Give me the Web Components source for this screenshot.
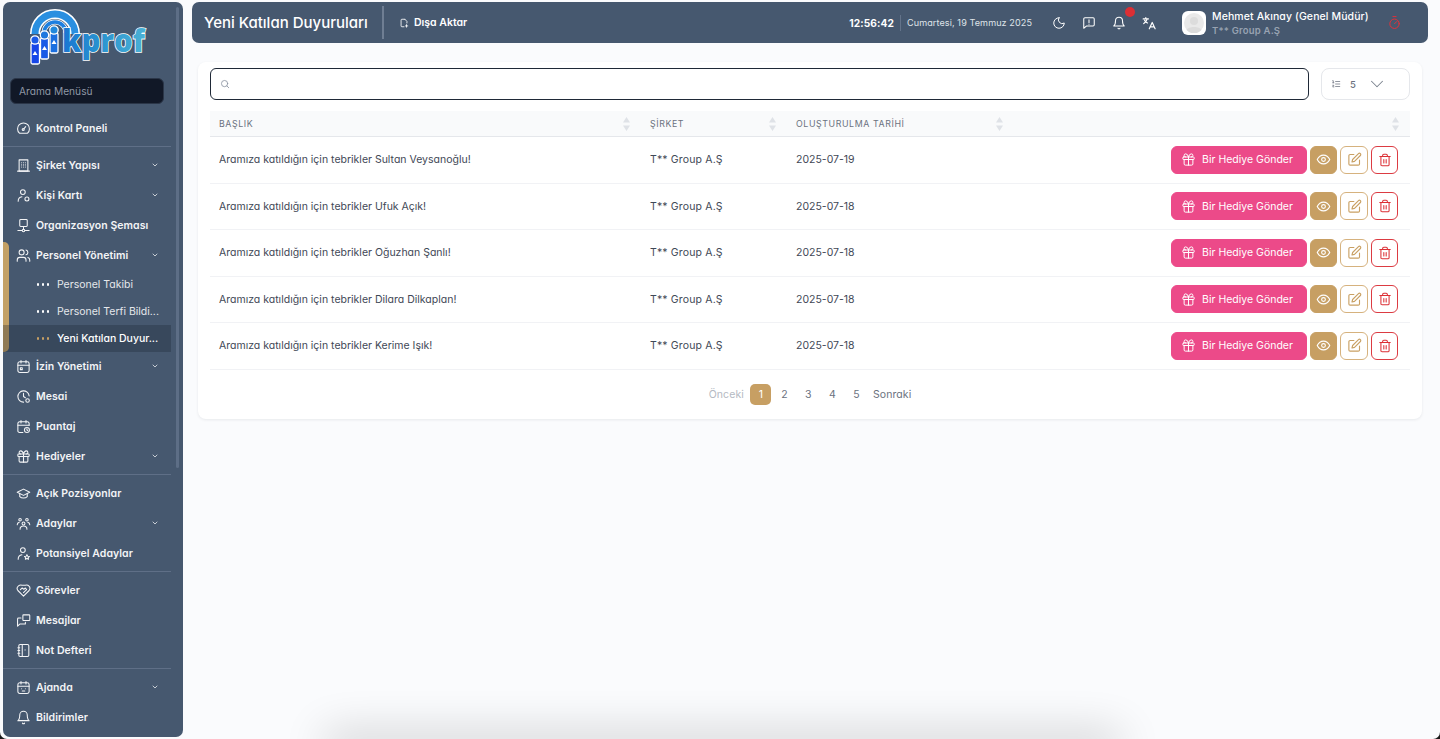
<!DOCTYPE html>
<html lang="tr">
<head>
<meta charset="utf-8">
<title>Yeni Katılan Duyuruları</title>
<style>
  html { background: #1a1a1a; height: 100%; }
  body {
    margin: 0; height: 739px; overflow: hidden; background: #fafbfd;
    border-radius: 0 0 7px 7px; position: relative;
    font-family: Inter, "Liberation Sans", sans-serif;
    font-feature-settings: "cv11" 1;
  }
</style>
</head>
<body>
<app-shell>
  <side-bar slot="side">
    <side-item icon="gauge" label="Kontrol Paneli"></side-item>
    <side-line></side-line>
    <side-item icon="building" label="Şirket Yapısı" caret></side-item>
    <side-item icon="userGear" label="Kişi Kartı" caret></side-item>
    <side-item icon="org" label="Organizasyon Şeması"></side-item>
    <side-group>
      <side-item icon="users" label="Personel Yönetimi" caret></side-item>
      <side-sub label="Personel Takibi"></side-sub>
      <side-sub label="Personel Terfi Bildi..."></side-sub>
      <side-sub label="Yeni Katılan Duyur..." active></side-sub>
    </side-group>
    <side-item icon="calendar" label="İzin Yönetimi" caret></side-item>
    <side-item icon="clockGear" label="Mesai"></side-item>
    <side-item icon="calendarClock" label="Puantaj"></side-item>
    <side-item icon="gift" label="Hediyeler" caret></side-item>
    <side-line></side-line>
    <side-item icon="cap" label="Açık Pozisyonlar"></side-item>
    <side-item icon="people" label="Adaylar" caret></side-item>
    <side-item icon="userStar" label="Potansiyel Adaylar"></side-item>
    <side-line></side-line>
    <side-item icon="gem" label="Görevler"></side-item>
    <side-item icon="messages" label="Mesajlar"></side-item>
    <side-item icon="notebook" label="Not Defteri"></side-item>
    <side-line></side-line>
    <side-item icon="calendarFace" label="Ajanda" caret></side-item>
    <side-item icon="bell" label="Bildirimler"></side-item>
  </side-bar>
  <top-bar slot="top" heading="Yeni Katılan Duyuruları"></top-bar>
  <list-card slot="main"></list-card>
</app-shell>

<script>
const ICONS = {
  gauge: '<path d="M5.5 19.5a9.5 9.5 0 1 1 13 0z"/><circle cx="11.5" cy="13.5" r="1.6"/><path d="M12.5 12.5l3-3.5"/>',
  building: '<rect x="5" y="3" width="14" height="18"/><path d="M2.5 21h19M9 7.5h.01M12 7.5h.01M15 7.5h.01M9 11h.01M12 11h.01M15 11h.01M9 14.5h.01M12 14.5h.01M15 14.5h.01"/>',
  userGear: '<circle cx="11" cy="6.5" r="3.8"/><path d="M3.5 21c0-4.5 2.5-6.5 6-7"/><circle cx="17.5" cy="17.5" r="3.2"/>',
  org: '<rect x="6" y="2.5" width="12" height="11" rx="1.5"/><path d="M12 13.5v5M3 20h6.5M14.5 20H21"/><circle cx="12" cy="20" r="2"/>',
  users: '<path d="M16 21v-2a4 4 0 0 0-4-4H6a4 4 0 0 0-4 4v2"/><circle cx="9" cy="7" r="4"/><path d="M22 21v-2a4 4 0 0 0-3-3.87"/><path d="M16 3.13a4 4 0 0 1 0 7.75"/>',
  calendar: '<rect x="3" y="4.5" width="18" height="17" rx="3"/><path d="M16 2.5v4M8 2.5v4M3 10h18"/><rect x="7" y="14" width="3" height="3"/>',
  clockGear: '<path d="M21 11a9 9 0 1 0-9 10"/><path d="M12 7v5l3 2"/><circle cx="18.5" cy="18.5" r="2.8"/>',
  calendarClock: '<path d="M21 10V7a2.5 2.5 0 0 0-2.5-2.5h-13A2.5 2.5 0 0 0 3 7v12a2.5 2.5 0 0 0 2.5 2.5H11"/><path d="M16 2.5v4M8 2.5v4M3 10h18"/><circle cx="17.5" cy="17.5" r="4"/><path d="M17.5 15.8v1.9l1.2.7"/>',
  gift: '<rect x="3" y="8" width="18" height="4" rx="1"/><path d="M12 8v13"/><path d="M19 12v7a2 2 0 0 1-2 2H7a2 2 0 0 1-2-2v-7"/><path d="M7.5 8a2.5 2.5 0 0 1 0-5A4.8 8 0 0 1 12 8a4.8 8 0 0 1 4.5-5 2.5 2.5 0 0 1 0 5"/>',
  cap: '<path d="M22 10L12 5 2 10l10 5z"/><path d="M6 12.5V17c3 3 9 3 12 0v-4.5"/>',
  people: '<circle cx="6.5" cy="6" r="2"/><circle cx="17.5" cy="6" r="2"/><circle cx="12" cy="12" r="2.3"/><path d="M2 14c0-2 1-3.5 3-3.8M22 14c0-2-1-3.5-3-3.8M6.5 21c0-3 2-5 5.5-5s5.5 2 5.5 5"/>',
  userStar: '<circle cx="11" cy="6.5" r="3.8"/><path d="M3.5 21c0-4.5 2.5-6.5 6-7"/><path d="M17.5 13.8l1.2 2.5 2.8.4-2 1.9.5 2.7-2.5-1.3-2.5 1.3.5-2.7-2-1.9 2.8-.4z"/>',
  gem: '<path d="M12 21L3 12a5.5 5.5 0 0 1 1-7.5C6 3 8 3 9.5 3.5H15c2-.7 4-.5 5.5 1.2A5.5 5.5 0 0 1 21 12z"/><path d="M7 10.5L10 8l2.5 2L15 8l2 2.5-5 5"/>',
  messages: '<rect x="11" y="3" width="11" height="9" rx="1"/><path d="M8 8H4a1.5 1.5 0 0 0-1.5 1.5V21l4-3.5H15V15"/>',
  notebook: '<rect x="4.5" y="2.5" width="16" height="19" rx="2"/><path d="M10 2.5v19M3 7.5h3M3 12h3M3 16.5h3M14.5 11h.01"/>',
  calendarFace: '<rect x="3" y="4.5" width="18" height="17" rx="3"/><path d="M16 2.5v4M8 2.5v4M3 10h18M9 14h.01M15 14h.01M10 17.5h4"/>',
  bell: '<path d="M6 8a6 6 0 0 1 12 0c0 7 3 9 3 9H3s3-2 3-9"/><path d="M10.3 21a1.94 1.94 0 0 0 3.4 0"/>',
  moon: '<path d="M12 3a6.5 6.5 0 0 0 9 9 9 9 0 1 1-9-9z"/>',
  alertMsg: '<path d="M21 15a2 2 0 0 1-2 2H8l-5 4V5a2 2 0 0 1 2-2h14a2 2 0 0 1 2 2z"/><path d="M12 6.5v5M12 14h.01"/>',
  translate: '<path d="M2 5h9M6.5 2.5V5M9 5c-.8 3-3 6-6 8M4.5 7.5c1 2 2.5 3.5 5 4.5"/><path d="M22.5 22l-5-11-5 11M14 18.5h7"/>',
  timer: '<circle cx="12" cy="14" r="7.5"/><path d="M12 14l3.5-3.5M9.5 2.5h5"/>',
  fileExport: '<path d="M14 3H7a2 2 0 0 0-2 2v14a2 2 0 0 0 2 2h5"/><path d="M14 3l5 5v4"/><path d="M18 16v6M15.5 19H21"/>',
  search: '<circle cx="11" cy="11" r="7.5"/><path d="M21 21l-4.5-4.5"/>',
  listNum: '<path d="M11 6h10M11 12h10M11 18h10M4 4h1.5v5M4 9h3M4 15h3l-3 4h3"/>',
  eye: '<path d="M2 12s3.5-7 10-7 10 7 10 7-3.5 7-10 7-10-7-10-7z"/><circle cx="12" cy="12" r="3"/>',
  edit: '<path d="M11 4H5a2 2 0 0 0-2 2v13a2 2 0 0 0 2 2h13a2 2 0 0 0 2-2v-6"/><path d="M18.4 2.6a2.1 2.1 0 0 1 3 3L12 15l-4 1 1-4z"/>',
  trash: '<path d="M3 6h18"/><path d="M19 6v14a2 2 0 0 1-2 2H7a2 2 0 0 1-2-2V6"/><path d="M8 6V4a2 2 0 0 1 2-2h4a2 2 0 0 1 2 2v2"/><path d="M10 11v6M14 11v6"/>',
  chevron: '<path d="M6 9l6 6 6-6"/>'
};

class UiIcon extends HTMLElement {
  connectedCallback() {
    const size = this.getAttribute('size') || 14;
    const sw = this.getAttribute('sw') || 2;
    this.attachShadow({ mode: 'open' }).innerHTML = `
      <style>:host { display: inline-flex; flex: none; } svg { display: block; }</style>
      <svg width="${size}" height="${size}" viewBox="0 0 24 24" fill="none" stroke="currentColor"
        stroke-width="${sw}" stroke-linecap="round" stroke-linejoin="round">${ICONS[this.getAttribute('name')]}</svg>`;
  }
}
customElements.define('ui-icon', UiIcon);

class AppShell extends HTMLElement {
  constructor() {
    super();
    this.attachShadow({ mode: 'open' }).innerHTML = `
      <style>
        :host { display: flex; height: 739px; padding: 2px 0 2px 3px; box-sizing: border-box; }
        .main { flex: 1; min-width: 0; padding: 0 12px 0 9px; }
        .content { padding: 19px 6px 0 6px; }
        .glow {
          position: absolute; left: 325px; width: 795px; bottom: -24px; height: 24px;
          box-shadow: 0 -6px 44px 0 rgba(0,0,0,.2);
        }
      </style>
      <slot name="side"></slot>
      <div class="main">
        <slot name="top"></slot>
        <div class="content"><slot name="main"></slot></div>
      </div>
      <div class="glow"></div>`;
  }
}
customElements.define('app-shell', AppShell);

class SideBar extends HTMLElement {
  constructor() {
    super();
    this.attachShadow({ mode: 'open' }).innerHTML = `
      <style>
        :host {
          display: block; position: relative; flex: none; width: 180px; height: 735px;
          background: #46586f; border-radius: 7px; overflow: hidden; color: #f3f4f6;
        }
        .logo { height: 76px; padding-left: 12px; }
        .logo svg { display: block; }
        .find { margin: 0 19px 9px 7px; }
        input {
          box-sizing: border-box; width: 154px; height: 26px; display: block;
          background: #111827; border: 1px solid #2b3648; border-radius: 6px; padding: 0 8px 1px;
          color: #fff; font: 400 10.2px Inter, "Liberation Sans", sans-serif;
          font-feature-settings: "cv11" 1;
        }
        input::placeholder { color: #8f97a5; opacity: 1; }
        .track { position: absolute; left: 173px; top: 5px; width: 3px; height: 461px; background: #5d6e86; border-radius: 2px; }
      </style>
      <div class="logo">
        <svg width="140" height="64" viewBox="0 0 140 64">
          <defs>
            <linearGradient id="tx" x1="0" x2="1" y1="0" y2="0">
              <stop offset="0" stop-color="#1976d2"/><stop offset=".45" stop-color="#2a93cf"/><stop offset="1" stop-color="#4cb2d6"/>
            </linearGradient>
          </defs>
          <path d="M20 32a20 20 0 0 1 40 0" fill="none" stroke="#fff" stroke-width="10"/>
          <path d="M20 32a20 20 0 0 1 40 0" fill="none" stroke="#2a8fe0" stroke-width="7"/>
          <path d="M29 31a11 11 0 0 1 22 0" fill="none" stroke="#fff" stroke-width="5"/>
          <path d="M29 31a11 11 0 0 1 22 0" fill="none" stroke="#1d7fe0" stroke-width="3.5"/>
          <g stroke="#fff" stroke-width="1.3">
            <rect x="16" y="41" width="8.5" height="21" rx="1.5" fill="#1646e8"/>
            <rect x="25.5" y="36" width="8" height="21" rx="1.5" fill="#1a5ae6"/>
            <rect x="35" y="31" width="8" height="20" rx="1.5" fill="#1a6fe0"/>
            <circle cx="20" cy="38" r="4.2" fill="#1a5ae6"/>
            <circle cx="29.5" cy="33" r="4.2" fill="#1f78de"/>
            <circle cx="39" cy="28" r="4.2" fill="#2189dc"/>
          </g>
          <path d="M20 49l2.5 4h-5zM29.5 44l2.5 4h-5zM39 38l2.5 4h-5z" fill="#fff"/>
          <text x="47" y="50" font-family="Open Sans" font-weight="800" font-size="32" fill="url(#tx)"
            stroke="#fff" stroke-width="1.6" paint-order="stroke" textLength="83" lengthAdjust="spacingAndGlyphs">kprof</text>
        </svg>
      </div>
      <div class="find"><input placeholder="Arama Menüsü"></div>
      <slot></slot>
      <div class="track"></div>`;
  }
}
customElements.define('side-bar', SideBar);

class SideItem extends HTMLElement {
  connectedCallback() {
    this.attachShadow({ mode: 'open' }).innerHTML = `
      <style>
        :host { display: flex; align-items: center; height: 30px; width: 168px; padding-left: 13px; box-sizing: border-box; }
        .t { margin-left: 5px; font-size: 10.5px; font-weight: 600; letter-spacing: .05px; white-space: nowrap; flex: 1; }
        .c { margin-right: 12px; opacity: .75; }
      </style>
      <ui-icon name="${this.getAttribute('icon')}" size="15" sw="1.7"></ui-icon>
      <span class="t">${this.getAttribute('label')}</span>
      ${this.hasAttribute('caret') ? '<ui-icon class="c" name="chevron" size="8" sw="3"></ui-icon>' : ''}`;
  }
}
customElements.define('side-item', SideItem);

class SideSub extends HTMLElement {
  connectedCallback() {
    const on = this.hasAttribute('active');
    this.attachShadow({ mode: 'open' }).innerHTML = `
      <style>
        :host {
          display: flex; position: relative; align-items: center; height: 27px; width: 168px; padding-left: 34px; box-sizing: border-box;
          background: ${on ? 'rgba(26,36,50,.3)' : 'transparent'};
        }
        i { width: 2.2px; height: 2.2px; border-radius: 50%; background: ${on ? '#c79f63' : '#fff'}; margin-right: 2.6px; }
        span {
          margin-left: 5.6px; font-size: 10.5px; white-space: nowrap;
          font-weight: ${on ? 500 : 400}; color: ${on ? '#fff' : '#e5e7eb'};
        }
      </style>
      <i></i><i></i><i></i>
      <span>${this.getAttribute('label')}</span>`;
  }
}
customElements.define('side-sub', SideSub);

class SideGroup extends HTMLElement {
  constructor() {
    super();
    this.attachShadow({ mode: 'open' }).innerHTML = `
      <style>
        :host { display: block; position: relative; margin-bottom: -1px; }
        ::slotted(side-item) { margin-bottom: 1px; }
        .bar {
          position: absolute; left: 0; top: 2px; bottom: 0; width: 6px; background: #c3a065;
          border-radius: 0 5px 5px 0;
        }
      </style>
      <div class="bar"></div><slot></slot>`;
  }
}
customElements.define('side-group', SideGroup);

class SideLine extends HTMLElement {
  constructor() {
    super();
    this.attachShadow({ mode: 'open' }).innerHTML = `
      <style>:host { display: block; width: 168px; height: 1px; margin: 3px 0; background: #5f6f87; }</style>`;
  }
}
customElements.define('side-line', SideLine);

class TopBar extends HTMLElement {
  connectedCallback() {
    this.attachShadow({ mode: 'open' }).innerHTML = `
      <style>
        :host {
          display: flex; align-items: center; height: 41px; background: #46586f; color: #fff;
          border-radius: 7px; padding: 0 26px 0 12px; box-sizing: border-box;
        }
        h1 { margin: 0; font-size: 15px; font-weight: 500; white-space: nowrap; width: 165px; }
        .sep { width: 2px; height: 33px; background: #6f7e93; margin-left: 13px; }
        .export { display: flex; align-items: center; gap: 5px; margin-left: 15px; font-size: 10.5px; font-weight: 600; }
        .clock { margin-left: auto; font-size: 10.2px; font-weight: 700; letter-spacing: .1px; }
        .thin { width: 1px; height: 16px; background: #63738a; margin: 0 6px; }
        .date { font-size: 9.05px; color: #dfe3e8; letter-spacing: .1px; white-space: nowrap; }
        .icons { display: flex; align-items: center; gap: 16px; margin-left: 20px; position: relative; }
        .dot {
          position: absolute; left: 73px; top: -9px; width: 10px; height: 10px;
          border-radius: 50%; background: #dc2f34;
        }
        .avatar {
          width: 24px; height: 24px; margin-left: 26px; border-radius: 6px; background: #fff;
          display: flex; align-items: center; justify-content: center; overflow: hidden;
        }
        .who { margin-left: 6px; width: 175px; }
        .name { font-size: 10.5px; font-weight: 500; white-space: nowrap; letter-spacing: .1px; }
        .org { font-size: 9.5px; font-weight: 600; color: #98a3b2; margin-top: 2px; letter-spacing: .2px; }
        .off { color: #e0313a; }
      </style>
      <h1>${this.getAttribute('heading')}</h1>
      <span class="sep"></span>
      <span class="export"><ui-icon name="fileExport" size="10" sw="2"></ui-icon>Dışa Aktar</span>
      <span class="clock">12:56:42</span>
      <span class="thin"></span>
      <span class="date">Cumartesi, 19 Temmuz 2025</span>
      <span class="icons">
        <ui-icon name="moon" size="14" sw="1.7"></ui-icon>
        <ui-icon name="alertMsg" size="14" sw="1.8"></ui-icon>
        <ui-icon name="bell" size="14" sw="1.8"></ui-icon>
        <ui-icon name="translate" size="14" sw="2"></ui-icon>
        <span class="dot"></span>
      </span>
      <span class="avatar">
        <svg width="20" height="20" viewBox="0 0 20 20"><circle cx="10" cy="10" r="10" fill="#e9e9e9"/><circle cx="10" cy="8" r="4" fill="#dcdcdc"/><path d="M2.5 17c1.5-4 13.5-4 15 0a10 10 0 0 1-15 0z" fill="#dcdcdc"/></svg>
      </span>
      <span class="who">
        <div class="name">Mehmet Akınay (Genel Müdür)</div>
        <div class="org">T** Group A.Ş</div>
      </span>
      <ui-icon class="off" name="timer" size="15" sw="1.6"></ui-icon>`;
  }
}
customElements.define('top-bar', TopBar);

const COLS = '431px 146px 227px 396px';

class SortMark extends HTMLElement {
  constructor() {
    super();
    this.attachShadow({ mode: 'open' }).innerHTML = `
      <style>:host { display: inline-flex; position: absolute; right: 10px; top: 50%; margin-top: -8px; }</style>
      <svg width="9" height="16" viewBox="0 0 9 16" fill="#dfe2e7"><path d="M4.5 1L8 6.5H1zM4.5 15L1 9.5h7z"/></svg>`;
  }
}
customElements.define('sort-mark', SortMark);

class ListCard extends HTMLElement {
  constructor() {
    super();
    const rows = [
      ['Aramıza katıldığın için tebrikler Sultan Veysanoğlu!', '2025-07-19'],
      ['Aramıza katıldığın için tebrikler Ufuk Açık!', '2025-07-18'],
      ['Aramıza katıldığın için tebrikler Oğuzhan Şanlı!', '2025-07-18'],
      ['Aramıza katıldığın için tebrikler Dilara Dilkaplan!', '2025-07-18'],
      ['Aramıza katıldığın için tebrikler Kerime Işık!', '2025-07-18']
    ];
    this.attachShadow({ mode: 'open' }).innerHTML = `
      <style>
        :host {
          display: block; height: 357px; box-sizing: border-box; padding: 6px 12px 0;
          background: #fff; border-radius: 8px; box-shadow: 0 1px 3px rgba(17,24,39,.08);
          color: #374151;
        }
        .tools { display: flex; gap: 12px; height: 32px; }
        .search {
          flex: 1; display: flex; align-items: center; padding-left: 9px;
          border: 1px solid #1f2937; border-radius: 6px; color: #8a93a1;
        }
        .size {
          width: 89px; box-sizing: border-box; display: flex; align-items: center; padding-left: 9px;
          border: 1px solid #e5e7eb; border-radius: 8px; color: #6b7280; font-size: 9.5px;
        }
        .size b { font-weight: 500; margin: 0 10px 0 9px; }
        .size .ch { color: #7a828e; }
        .head {
          display: grid; grid-template-columns: ${COLS}; align-items: center;
          margin-top: 11px; height: 26px; background: #f9fafb; border-bottom: 1px solid #e5e7eb; box-sizing: border-box;
          color: #6b7280; font-size: 8.8px; font-weight: 400; letter-spacing: .6px;
        }
        .head div { position: relative; padding-left: 9px; line-height: 25px; height: 25px; }
        .pages {
          display: flex; align-items: center; justify-content: center; margin-top: 14px; height: 21px;
          font-size: 10.5px; color: #6b7280; letter-spacing: .1px;
        }
        .pages span { width: 24px; text-align: center; }
        .pages .on {
          width: 21px; height: 21px; line-height: 21px; background: #c79f63; color: #fff;
          border-radius: 5px; margin: 0 1px 0 1.5px;
        }
        .pages .w { width: auto; }
        .pages .off { color: #b4b9c2; margin-right: 5px; }
        .pages .nx { margin-left: 4.5px; }
      </style>
      <div class="tools">
        <div class="search"><ui-icon name="search" size="10" sw="2"></ui-icon></div>
        <div class="size">
          <ui-icon name="listNum" size="10" sw="1.8"></ui-icon><b>5</b>
          <ui-icon class="ch" name="chevron" size="22" sw="1.1"></ui-icon>
        </div>
      </div>
      <div class="head">
        <div>BAŞLIK<sort-mark></sort-mark></div>
        <div>ŞİRKET<sort-mark></sort-mark></div>
        <div>OLUŞTURULMA TARİHİ<sort-mark></sort-mark></div>
        <div><sort-mark></sort-mark></div>
      </div>
      ${rows.map(r => `<announce-row heading="${r[0]}" company="T** Group A.Ş" date="${r[1]}"></announce-row>`).join('')}
      <div class="pages">
        <span class="w off">Önceki</span>
        <span class="on">1</span><span>2</span><span>3</span><span>4</span><span>5</span>
        <span class="w nx">Sonraki</span>
      </div>`;
  }
}
customElements.define('list-card', ListCard);

class AnnounceRow extends HTMLElement {
  connectedCallback() {
    this.attachShadow({ mode: 'open' }).innerHTML = `
      <style>
        :host {
          display: grid; grid-template-columns: ${COLS}; align-items: center; height: 46.5px;
          box-sizing: border-box; border-bottom: 1.5px solid #f1f2f5;
          font-size: 10.5px; color: #3f4856;
        }
        .c { padding-left: 9px; white-space: nowrap; }
        .co { letter-spacing: .15px; }
        .acts { display: flex; justify-content: flex-end; gap: 3px; padding-right: 12px; }
        .btn {
          box-sizing: border-box; height: 28px; width: 28px; border-radius: 6px; border: 1px solid;
          display: flex; align-items: center; justify-content: center;
        }
        .gift { width: 136px; background: #ec4a89; border-color: #ec4a89; color: #fff; font-size: 10.5px; gap: 6px; padding-right: 4px; }
        .eye { width: 27px; background: #c79f63; border-color: #c79f63; color: #fff; }
        .edit { border-color: #d6b27e; color: #c9a063; background: #fff; }
        .del { width: 27px; border-color: #dc3b42; color: #dc2f34; background: #fff; }
      </style>
      <div class="c">${this.getAttribute('heading')}</div>
      <div class="c co">${this.getAttribute('company')}</div>
      <div class="c">${this.getAttribute('date')}</div>
      <div class="acts">
        <span class="btn gift"><ui-icon name="gift" size="15" sw="1.6"></ui-icon>Bir Hediye Gönder</span>
        <span class="btn eye"><ui-icon name="eye" size="15" sw="1.8"></ui-icon></span>
        <span class="btn edit"><ui-icon name="edit" size="15" sw="1.8"></ui-icon></span>
        <span class="btn del"><ui-icon name="trash" size="14" sw="1.8"></ui-icon></span>
      </div>`;
  }
}
customElements.define('announce-row', AnnounceRow);
</script>
</body>
</html>
